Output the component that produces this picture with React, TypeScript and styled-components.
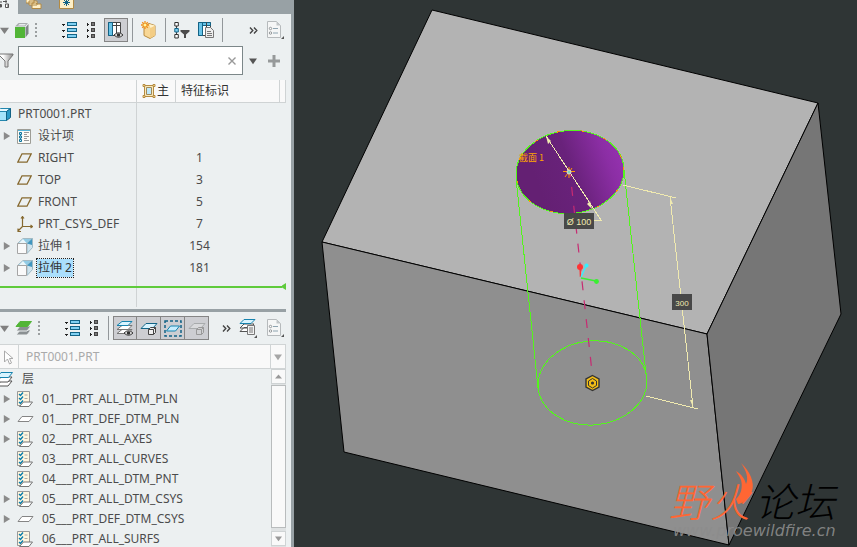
import React from "react";
import styled, { createGlobalStyle, css } from "styled-components";

const GlobalStyle = createGlobalStyle`
  * { box-sizing: border-box; }
  body { margin: 0; overflow: hidden; }
  button, input, select { font: inherit; color: inherit; }
  svg { display: block; flex: none; }
`;

const ui = '"Noto Sans", "Noto Sans CJK SC", sans-serif';

const Page = styled.div`
  display: flex;
  height: 100vh;
  background: #2f3535;
  color: #4b4b4b;
  font: 12px/20px ${ui};
`;

const Sidebar = styled.aside`
  display: flex;
  flex-direction: column;
  flex: none;
  width: 294px;
  background: #ecf0f1;
  border-right: 3px solid #98a1a5;
  overflow: hidden;
`;

const TabStrip = styled.div`
  display: flex;
  height: 14px;
  flex: none;
  overflow: hidden;
  background: #98a1a5;
`;

const Tab = styled.button<{ $active?: boolean }>`
  display: flex;
  align-items: flex-start;
  justify-content: ${(p) => (p.$active ? "flex-start" : "center")};
  width: ${(p) => (p.$active ? 18 : 32)}px;
  height: 14px;
  padding: 0;
  border: 0;
  background: ${(p) => (p.$active ? "#ecf0f1" : "transparent")};
`;

const Toolbar = styled.div`
  display: flex;
  align-items: center;
  flex: none;
  height: 32px;
  margin-right: 4px;
`;

const ToolButton = styled.button<{ $w?: number; $gap?: number; $on?: boolean }>`
  display: flex;
  align-items: center;
  justify-content: center;
  flex: none;
  width: ${(p) => p.$w ?? 24}px;
  height: 24px;
  margin: 0 0 0 ${(p) => p.$gap ?? 0}px;
  padding: 0;
  border: 0;
  background: none;
  ${(p) =>
    p.$on &&
    css`
      background: #cdced2;
      border: 1px solid #858585;
    `}
`;

const ButtonGroup = styled.div`
  display: flex;
  & > button + button { border-left-width: 0; }
`;

const Separator = styled.span`
  flex: none;
  width: 1px;
  height: 24px;
  margin: 0 4px;
  background: #92979a;
`;

const Push = styled.span`
  flex: 1;
`;

const SearchRow = styled.div`
  display: flex;
  align-items: center;
  flex: none;
  height: 29px;
  margin: 0 6px 5px 0;
`;

const SearchBox = styled.label`
  display: flex;
  align-items: center;
  flex: 1;
  height: 29px;
  margin-left: 4px;
  background: #fff;
  border: 1px solid #7c8789;
`;

const SearchInput = styled.input`
  flex: 1;
  min-width: 0;
  height: 24px;
  padding: 0 6px;
  border: 0;
  outline: 0;
  background: none;
`;

const TreeTable = styled.table`
  flex: none;
  width: 286px;
  border-collapse: separate;
  border-spacing: 0;
  table-layout: fixed;
`;

const HeadCell = styled.th<{ $w?: number }>`
  width: ${(p) => (p.$w ? `${p.$w}px` : "auto")};
  height: 23px;
  padding: 0 0 0 5px;
  overflow: hidden;
  background: #f9f9f9;
  border-right: 1px solid #cfd3d4;
  border-bottom: 1px solid #cfd3d4;
  font-weight: 400;
  color: #333;
  text-align: left;
  white-space: nowrap;
`;

const HeadLabel = styled.span`
  display: flex;
  align-items: center;
  gap: 1px;
`;

const NameCell = styled.td`
  height: 22px;
  padding: 0;
  border-right: 1px solid #cfd3d4;
`;

const IdCell = styled.td`
  padding: 0 18px 0 0;
  text-align: center;
`;

const FootCell = styled.td<{ $edge?: boolean }>`
  height: 28px;
  padding: 0;
  border-right: ${(p) => (p.$edge ? "1px solid #cfd3d4" : "0")};
`;

const RowLine = styled.div<{ $root?: boolean; $layer?: boolean }>`
  display: flex;
  align-items: center;
  height: ${(p) => (p.$layer ? 20 : 22)}px;
  white-space: nowrap;
  ${(p) => p.$root && "margin-left: -4px;"}
`;

const Expander = styled.button`
  display: flex;
  align-items: center;
  justify-content: flex-start;
  width: 17px;
  height: 20px;
  padding: 0 0 0 3px;
  flex: none;
  border: 0;
  background: none;
`;

const ExpanderSpace = styled.span`
  flex: none;
  width: 17px;
`;

const IconSlot = styled.span<{ $w?: number }>`
  display: flex;
  flex: none;
  width: ${(p) => p.$w ?? 20}px;
`;

const Name = styled.span<{ $selected?: boolean }>`
  line-height: 18px;
  padding: 0 1px;
  ${(p) =>
    p.$selected &&
    css`
      background: #abdffc;
      outline: 1px dotted #222;
      outline-offset: 0;
      color: #333;
    `}
`;

const InsertMarker = styled.div`
  display: flex;
  align-items: center;
  flex: none;
  width: 286px;
  height: 7px;
  margin: -24px 0 17px;
`;

const InsertLine = styled.span`
  flex: 1;
  height: 2px;
  background: #5fcb3c;
`;

const Divider = styled.hr`
  flex: none;
  width: 286px;
  height: 3px;
  margin: 2px 0 0;
  border: 0;
  background: #98a1a5;
`;

const PathRow = styled.div`
  display: flex;
  align-items: stretch;
  flex: none;
  height: 25px;
  margin-right: 5px;
  border: solid #d0d4d5;
  border-width: 1px 1px 1px 0;
  background: #f9f9f9;
`;

const PathSelect = styled.select`
  flex: 1;
  min-width: 0;
  padding: 0 7px;
  border: solid #d0d4d5;
  border-width: 0 1px;
  background: none;
  color: #aaa;
  appearance: none;
`;

const LayerArea = styled.div`
  display: flex;
  flex: 1;
  min-height: 0;
  margin-right: 5px;
`;

const LayerList = styled.ul`
  flex: 1;
  min-width: 0;
  margin: 0;
  padding: 0;
  list-style: none;
  overflow: hidden;
`;

const ScrollTrack = styled.div`
  display: flex;
  flex-direction: column;
  flex: none;
  gap: 1px;
  width: 15px;
  padding-bottom: 1px;
  background: #dfe2e3;
`;

const ScrollButton = styled.button`
  display: flex;
  align-items: center;
  justify-content: center;
  height: 15px;
  padding: 0;
  border: 1px solid #cfd3d4;
  background: #f9f9f9;
`;

const ScrollThumb = styled.div`
  flex: 1;
  margin-bottom: 2px;
  border: 1px solid #b9bcbd;
  background: #f9f9f9;
`;

const Viewport = styled.main`
  flex: 1;
  min-width: 0;
  & > svg { width: 100%; height: 100%; }
`;

/* ---------- icons ---------- */

const Triangle = ({ dir, size = 9, fill = "#808080" }: { dir: "down" | "right" | "up"; size?: number; fill?: string }) => (
  <svg width={size} height={size} viewBox="0 0 10 10">
    <path fill={fill} d={dir === "down" ? "M0 2h10L5 9z" : dir === "up" ? "M0 8h10L5 2z" : "M1 0l8 5-8 5z"} />
  </svg>
);

const Cube = () => (
  <svg width="14" height="15" viewBox="0 0 14 15">
    <path d="M0 4h10v11H0z" fill="#52b537" />
    <path d="M0 3.5 3.5 0H13l-3 3.5z" fill="#a9adaf" />
    <path d="M10.5 4.500 13.500 1v9.500l-3 4z" fill="#7e8486" />
    <path d="M3 2.500 4.500 1H11L9.500 2.500z" fill="#e7ebec" />
  </svg>
);

const Grip = () => (
  <svg width="2" height="14" fill="#9b9fa0" shapeRendering="crispEdges">
    {[0, 4, 8, 12].map((y) => <rect key={y} y={y} width="2" height="2" />)}
  </svg>
);

const WideList = () => (
  <svg width="17" height="17" viewBox="0 0 17 17" shapeRendering="crispEdges">
    {[0, 6, 12].map((y) => (
      <g key={y}>
        <path d={`M1 ${y + 2}h3v1H3v1H2v-1H1z`} fill="#222" />
        <rect x="6.500" y={y + 0.5} width="9" height="3" fill="#7fd0f2" stroke="#126386" />
      </g>
    ))}
  </svg>
);

const SmallList = () => (
  <svg width="9" height="17" viewBox="0 0 9 17" shapeRendering="crispEdges">
    {[0, 6, 12].map((y) => (
      <g key={y}>
        <path d={`M0 ${y + 1}h1v1h1v1H1v1H0z`} fill="#222" />
        <rect x="4.500" y={y + 0.5} width="3" height="3" fill="#777" stroke="#444" />
      </g>
    ))}
  </svg>
);

const Eye = ({ x = 0, y = 0 }: { x?: number; y?: number }) => (
  <g transform={`translate(${x} ${y})`}>
    <path d="M0 3Q4.500-1.500 9 3 4.500 7.500 0 3z" fill="#eee" stroke="#333" />
    <circle cx="4.500" cy="3" r="1.800" fill="#333" />
  </g>
);

const ColumnsEye = () => (
  <svg width="16" height="17" viewBox="0 0 16 17">
    <path d="M.5.500h12v13H.5z" fill="#fff" stroke="#444" />
    <path d="M.5.500h4v13h-4z" fill="#68c3e7" stroke="#126386" />
    <path d="M4.500 3.500h8M8.500.500v13" stroke="#444" />
    <Eye x={6} y={10} />
  </svg>
);

const NewPart = () => (
  <svg width="17" height="18" viewBox="0 0 17 18">
    <path d="M3 5.500 8 2.500l6 2v10l-5 3-6-3z" fill="#f8d795" stroke="#b98a3d" />
    <path d="M9 6.500 14 4.500v10l-5 3z" fill="#f3cd85" />
    <path d="M8 3l1.500 4 4.500-2.500z" fill="#fff1c9" />
    <path d="M4 0v8M0 4h8M1.200 1.200l5.600 5.600M6.800 1.200 1.200 6.800" stroke="#f0901c" strokeWidth="1.300" />
    <circle cx="4" cy="4" r="1.500" fill="#fff6a0" />
  </svg>
);

const NodeFilter = () => (
  <svg width="16" height="17" viewBox="0 0 16 17">
    <path d="M2.500 4v9" stroke="#444" />
    <path d="M.8.500h3.500V4H.8zM.8 12.500h3.500V16H.8z" fill="#fff" stroke="#333" />
    <path d="M.8 6.500h3.500V10H.8z" fill="#7fd0f2" stroke="#126386" />
    <path d="M6.500 8h9v1.500l-3.500 3V16h-2v-3.500l-3.500-3z" fill="#4c4c4c" />
  </svg>
);

const ColumnsDoc = () => (
  <svg width="16" height="16" viewBox="0 0 16 16">
    <path d="M.5.500h12v13H.5z" fill="#fff" stroke="#444" />
    <path d="M.5.500h4v13h-4zM4.500.500h8v3h-8z" fill="#68c3e7" stroke="#126386" />
    <path d="M8.500.500v5" stroke="#444" />
    <path d="M7.500 5.500h5l3 3v7h-8z" fill="#eee" stroke="#777" />
    <path d="M9 9.500h4M9 11.500h5M9 13.500h5" stroke="#777" />
  </svg>
);

const Doc = () => (
  <svg width="17" height="19" viewBox="0 0 17 19">
    <path d="M.5.500h9l4 4v12H.5z" fill="#f5f6f6" stroke="#b6babc" />
    <path d="M9.500.500v4h4z" fill="#c2c6c8" />
    <circle cx="3.500" cy="7.500" r="1.200" fill="#fff" stroke="#919597" />
    <circle cx="3.500" cy="12" r="1.200" fill="#fff" stroke="#919597" />
    <path d="M6 7.500h5M6 12h5" stroke="#8ea4b0" />
    <path d="M17 15v3h-3z" fill="#555" />
  </svg>
);

const Chevrons = () => (
  <svg width="9" height="7" viewBox="0 0 9 7" fill="none" stroke="#444" strokeWidth="1.400">
    <path d="M1 .5 3.800 3.500 1 6.500M5 .5l2.800 3L5 6.500" />
  </svg>
);

const Funnel = () => (
  <svg width="14" height="16" viewBox="0 0 14 16">
    <defs>
      <linearGradient id="funnel"><stop offset="0.3" stopColor="#fff" /><stop offset="1" stopColor="#888" /></linearGradient>
    </defs>
    <path d="M-1 1h14v1L8 8v6H5V8L-1 2z" fill="url(#funnel)" stroke="#777" />
  </svg>
);

const Cross = () => (
  <svg width="8" height="8" viewBox="0 0 8 8"><path d="M.5.500l7 7M7.500.500l-7 7" stroke="#999" strokeWidth="1.400" /></svg>
);

const Plus = () => (
  <svg width="12" height="12" viewBox="0 0 12 12"><path d="M6 0v12M0 6h12" stroke="#96999a" strokeWidth="3" /></svg>
);

const SectionIcon = () => (
  <svg width="14" height="14" viewBox="0 0 14 14">
    <path d="M2.500 1.500h9v11h-9z" fill="#fbe9bb" stroke="#b58c42" />
    <path d="M4.500 3.500h5v7h-5z" fill="#bfe8fa" stroke="#a08a5a" />
    <path d="M1 .5h2v2H1zM11 .5h2v2h-2zM1 11.500h2v2H1zM11 11.500h2v2h-2z" fill="#ffe4a0" stroke="#b58c42" />
  </svg>
);

const PartIcon = () => (
  <svg width="15" height="13" viewBox="0 0 15 13">
    <path d="M.5 3.500h10v9H.5z" fill="#a6e4fb" stroke="#2387ae" />
    <path d="M.5 3.500l4-3h10l-4 3z" fill="#e9f9ff" stroke="#2387ae" />
    <path d="M10.500 3.500l4-3v9l-4 3z" fill="#2b9ac7" stroke="#126386" />
  </svg>
);

const DesignIcon = () => (
  <svg width="14" height="15" viewBox="0 0 14 15">
    <path d="M.5.500h13v14H.5z" fill="#fbfbf7" stroke="#9d9d96" />
    <path d="M1 1h12v1H1z" fill="#56b4d8" />
    <path d="M3.500 3v9" stroke="#2386ae" />
    <path d="M2.500 3.500h2v2h-2zM2.500 7h2v2h-2zM2.500 10.500h2v2h-2z" fill="#bdeafa" stroke="#12749c" />
    <path d="M7 3.500h5M7 5.500h3M7 7.500h5M7 9.500h3M7 11.500h5" stroke="#999" />
  </svg>
);

const PlaneIcon = () => (
  <svg width="15" height="10" viewBox="0 0 15 10"><path d="M5 .8h9.200L10 9.200H.8z" fill="none" stroke="#86692f" strokeWidth="1.300" /></svg>
);

const CsysIcon = () => (
  <svg width="16" height="16" viewBox="0 0 16 16" fill="none" stroke="#86692f" strokeWidth="1.200">
    <path d="M5.500 1v9.500H15M5.500 10.500 1 15M4 2.500l1.500-2 1.500 2M13.500 9l2 1.500-2 1.500M1 12.500v3h3" />
  </svg>
);

const ExtrudeIcon = () => (
  <svg width="16" height="16" viewBox="0 0 16 16">
    <path d="M.5 5.500 6 .5h9.500L10 5.500z" fill="#91cbe5" stroke="#a4bac3" />
    <path d="M10 5.500 15.500.500v9L10 15.500z" fill="#cfe4ee" stroke="#9dbac6" />
    <path d="M10 5.500 15 1v6z" fill="#3f96bf" />
    <path d="M2 5 6 1l3.500 4z" fill="#ebf7fb" />
    <path d="M.5 5.500H9.500v10h-9z" fill="#fafafa" stroke="#a5a5a5" />
  </svg>
);

const StackIcon = ({ green }: { green?: boolean }) => (
  <svg width="17" height="15" viewBox="0 0 17 15">
    {[9, 5].map((y) => (
      <path key={y} d={`M5 ${y}h11l-4 5H1z`} fill={green ? "#8a9092" : "#fff"} stroke={green ? "#ecf0f1" : "#555"} />
    ))}
    <path d="M5 .5h11.500l-4 5H1z" fill={green ? "#52b537" : "#d9f4ff"} stroke={green ? "#52b537" : "#1783ae"} />
  </svg>
);

const LayersEye = () => (
  <svg width="18" height="17" viewBox="0 0 18 17">
    <path d="M6 9.500h10l-4 4H1z" fill="#fff" stroke="#777" />
    <path d="M6 5.500h10l-4 4H1z" fill="#fff" stroke="#777" />
    <path d="M6 1.500h10l-4 4H1z" fill="#d9f4ff" stroke="#1783ae" />
    <Eye x={8} y={10} />
  </svg>
);

const LayerBox = ({ muted }: { muted?: boolean }) => (
  <svg width="18" height="17" viewBox="0 0 18 17">
    <path d="M6 3.500h11l-4.500 5H1z" fill={muted ? "#d9dadc" : "#d9f4ff"} stroke={muted ? "#a8abac" : "#126386"} />
    <path d="M8.500 9.500 10.500 7.500h5v5L13.500 14.500h-5zM8.500 9.500h5v5M13.500 9.500l2-2" fill={muted ? "#cfd0d2" : "#eee"} stroke={muted ? "#999" : "#444"} />
  </svg>
);

const LayerSelect = () => (
  <svg width="18" height="17" viewBox="0 0 18 17">
    <path d="M1 1h16v15H1z" fill="none" stroke="#126386" strokeWidth="1.500" strokeDasharray="3 2" />
    <path d="M6.500 6h9l-4 5H2.500z" fill="#c6eeff" stroke="#1783ae" />
  </svg>
);

const LayerDoc = () => (
  <svg width="18" height="19" viewBox="0 0 18 19">
    <path d="M5 8.500h10l-4 4H1zM5 5h10l-4 4H1z" fill="#fff" stroke="#555" />
    <path d="M5 .5h11l-4 4H1z" fill="#d9f4ff" stroke="#1783ae" />
    <path d="M8.500 6.500h7v9h-7z" fill="#f3f3f3" stroke="#777" />
    <path d="M10 9h4M10 11h4M10 13h4" stroke="#777" />
    <path d="M18 16v3h-3z" fill="#555" />
  </svg>
);

const Pointer = () => (
  <svg width="10" height="15" viewBox="0 0 10 15"><path d="M.5 1v11l3-3 2 5 2-1-2-4.500H9z" fill="#fff" stroke="#aaa" /></svg>
);

const RuleIcon = () => (
  <svg width="16" height="16" viewBox="0 0 16 16">
    <path d="M.5.500h12v14H.5z" fill="#fff6df" stroke="#999" />
    <path d="M2 3l1.500 1.500L6 1.500M2 7l1.500 1.500L6 5.500M2 11l1.500 1.500L6 9.500" fill="none" stroke="#087cab" strokeWidth="1.400" />
    <path d="M7.500 4h3M7.500 7.500h3" stroke="#aaa" />
    <path d="M6.500 11h9L12 15.500H2.500z" fill="#fff" stroke="#777" />
  </svg>
);

const SheetIcon = () => (
  <svg width="17" height="7" viewBox="0 0 17 7"><path d="M5 .5h11l-4 5H1z" fill="#fff" stroke="#858585" /></svg>
);

const TreeTabIcon = () => (
  <svg width="10" height="9" viewBox="0 0 10 9"><path d="M0 2h2M6 0v3M.5 4v3M8 4.500v3M3 1.500h4M5.500 4h3v3.500h-3zM0 4.500h1.500V7H0z" fill="#fff" stroke="#555" /></svg>
);

const FoldersTabIcon = () => (
  <svg width="16" height="9" viewBox="0 0 16 9"><path d="M0-2h8v5H0zM3 1h8v4H3zM6 3h4l1 1h4v4.500H6z" fill="#fff0c7" stroke="#b28a44" /></svg>
);

const StarTabIcon = () => (
  <svg width="15" height="9" viewBox="0 0 15 9">
    <path d="M.5-2h14V8.500H.5z" fill="#fff0c7" stroke="#b28a44" />
    <path d="M7.500 0v6M4 2.500h7M5 0l5 5M10 0 5 5" stroke="#126386" />
  </svg>
);

/* ---------- data ---------- */

type Row = { name: string; id?: string; icon: React.ReactNode; open?: boolean; selected?: boolean; root?: boolean };

const rows: Row[] = [
  { name: "PRT0001.PRT", icon: <PartIcon />, root: true },
  { name: "设计项", icon: <DesignIcon />, open: true },
  { name: "RIGHT", id: "1", icon: <PlaneIcon /> },
  { name: "TOP", id: "3", icon: <PlaneIcon /> },
  { name: "FRONT", id: "5", icon: <PlaneIcon /> },
  { name: "PRT_CSYS_DEF", id: "7", icon: <CsysIcon /> },
  { name: "拉伸 1", id: "154", icon: <ExtrudeIcon />, open: true },
  { name: "拉伸 2", id: "181", icon: <ExtrudeIcon />, open: true, selected: true },
];

const layers = [
  { name: "01___PRT_ALL_DTM_PLN", open: true },
  { name: "01___PRT_DEF_DTM_PLN", open: true, sheet: true },
  { name: "02___PRT_ALL_AXES", open: true },
  { name: "03___PRT_ALL_CURVES" },
  { name: "04___PRT_ALL_DTM_PNT" },
  { name: "05___PRT_ALL_DTM_CSYS", open: true },
  { name: "05___PRT_DEF_DTM_CSYS", open: true, sheet: true },
  { name: "06___PRT_ALL_SURFS" },
];

const Toggle = ({ open, name }: { open?: boolean; name: string }) =>
  open ? (
    <Expander aria-label={name}><Triangle dir="right" size={8} fill="#8b8b8b" /></Expander>
  ) : (
    <ExpanderSpace />
  );

const ModelTree = () => (
  <TreeTable>
    <thead>
      <tr>
        <HeadCell $w={137} />
        <HeadCell $w={39}><HeadLabel><SectionIcon />主</HeadLabel></HeadCell>
        <HeadCell $w={104}>特征标识</HeadCell>
        <HeadCell />
      </tr>
    </thead>
    <tbody>
      {rows.map((r) => (
        <tr key={r.name}>
          <NameCell>
            <RowLine $root={r.root}>
              {!r.root && <Toggle open={r.open} name={r.name} />}
              <IconSlot $w={r.root ? 21 : 20}>{r.icon}</IconSlot>
              <Name $selected={r.selected}>{r.name}</Name>
            </RowLine>
          </NameCell>
          <IdCell colSpan={2}>{r.id}</IdCell>
        </tr>
      ))}
      <tr>
        <FootCell $edge />
        <FootCell colSpan={3} />
      </tr>
    </tbody>
  </TreeTable>
);

const cream = "#f0eab0";
const lime = "#54f51c";

const Scene = () => (
  <svg viewBox="294 0 563 547" preserveAspectRatio="xMinYMin slice" role="img" aria-label="PRT0001">
    <defs>
      <linearGradient id="bore" x1="0.1" x2="1" y1="0.2" y2="0">
        <stop stopColor="#642073" />
        <stop offset="0.38" stopColor="#69227b" />
        <stop offset="0.75" stopColor="#8b2ea4" />
        <stop offset="1" stopColor="#9a34b6" />
      </linearGradient>
    </defs>
    <g stroke="#000" strokeLinejoin="round">
      <path d="M432 10 818 103 707 334 322 242z" fill="#b3b3b3" />
      <path d="M322 242 707 334 729 545 344 452z" fill="#8f8f8f" />
      <path d="M707 334 818 103 841 314 729 545z" fill="#767676" />
    </g>
    <g fill="none" stroke={lime} shapeRendering="crispEdges">
      <ellipse cx="570" cy="172" rx="54" ry="41.500" fill="url(#bore)" transform="rotate(-5 570 172)" />
      <ellipse cx="570" cy="172" rx="54" ry="41.500" stroke="#ff9800" strokeDasharray="3 21" transform="rotate(-5 570 172)" />
      <ellipse cx="592.500" cy="383" rx="54.500" ry="42" transform="rotate(-5 592 383)" />
      <path d="M516 178 538 388M624 170 647 383" />
    </g>
    <path d="M570 172 592 372" stroke="#c72b72" strokeWidth="1.200" strokeDasharray="9 10" strokeDashoffset="4" />
    <g fill="none" stroke={cream} shapeRendering="crispEdges">
      <path d="M546 136 601 220H594M623 185 676 198M670 197 693 407M646 396 698 409" />
    </g>
    <path d="M546 136 551 141 548 144zM592 209 587 204 590 201zM670 197 673 204 670 204zM693 407 690 400 693 400z" fill={cream} />
    <g stroke="#ff9800">
      <path d="M563 171.500h12M569 167v11M565 177l3-4M572 168l-2 3" />
      <circle cx="569" cy="172" r="2" fill="#7fd7b5" stroke="#ddd" />
    </g>
    <text x="519" y="161" fill="#ffa500" fontFamily='"Noto Sans CJK SC", sans-serif' fontSize="9">截面 1</text>
    <path d="M564 213h30v16h-30zM672 294h20v16h-20z" fill="#484848" />
    <text x="579" y="225" fill={cream} textAnchor="middle" fontFamily='"Liberation Sans", sans-serif' fontSize="9">Ø 100</text>
    <text x="682" y="306" fill={cream} textAnchor="middle" fontFamily='"Liberation Sans", sans-serif' fontSize="8">300</text>
    <g strokeWidth="1.400">
      <path d="M580 267 580.500 277" stroke="#ff3434" />
      <path d="M581 277 586 266" stroke="#35efff" />
      <path d="M581 278 596 281" stroke="#3aef32" />
    </g>
    <circle cx="580" cy="267" r="3" fill="#f33" />
    <circle cx="586.500" cy="265.500" r="2" fill="#35efff" />
    <circle cx="596.500" cy="281.500" r="2.400" fill="#3aef32" />
    <path d="M592.500 375.500 599 379v8l-6.500 3.500L586 387v-8z" fill="#f2bd16" stroke="#333" strokeWidth="1.400" />
    <path d="M592.500 378.500 596.500 381v4.500l-4 2.500-4-2.500V381z" fill="#f2bd16" stroke="#333" />
    <circle cx="592.500" cy="383" r="1.600" fill="#333" />
    <g fontFamily='"Noto Sans CJK SC", sans-serif' fontSize="40" fontStyle="italic" fontWeight="300">
      <text x="669" y="517" fill="#ff6633">野</text>
      <text x="710" y="517" fill="#ff6633">火</text>
      <text x="755" y="517" fill="#000">论坛</text>
    </g>
    <path d="M741 463C750 471 755 483 752 491C749 499 742 504 738 504L736 499C741 495 743 487 741 480C739 475 737 473 736 471C741 474 745 479 746 484C749 478 746 470 741 463z" fill="#ff6633" />
    <text x="673" y="536" fill="#8c8c8c" fillOpacity="0.9" fontFamily='"DejaVu Sans", sans-serif' fontSize="16" fontStyle="italic">www.proewildfire.cn</text>
  </svg>
);

export default function App() {
  return (
    <Page>
      <GlobalStyle />
      <Sidebar>
        <TabStrip>
          <Tab $active aria-label="模型树"><TreeTabIcon /></Tab>
          <Tab aria-label="文件夹"><FoldersTabIcon /></Tab>
          <Tab aria-label="收藏夹"><StarTabIcon /></Tab>
        </TabStrip>
        <Toolbar>
          <ToolButton $w={9} aria-label="菜单"><Triangle dir="down" /></ToolButton>
          <ToolButton $w={14} $gap={6} aria-label="模型"><Cube /></ToolButton>
          <ToolButton $w={2} $gap={6} aria-label="移动"><Grip /></ToolButton>
          <ToolButton $gap={20} aria-label="展开全部"><WideList /></ToolButton>
          <ToolButton $w={20} aria-label="收缩全部"><SmallList /></ToolButton>
          <ToolButton $gap={3} $on aria-label="显示列"><ColumnsEye /></ToolButton>
          <Separator />
          <ToolButton aria-label="新建"><NewPart /></ToolButton>
          <Separator />
          <ToolButton aria-label="树过滤器"><NodeFilter /></ToolButton>
          <ToolButton aria-label="树列"><ColumnsDoc /></ToolButton>
          <Separator />
          <Push />
          <ToolButton $w={20} aria-label="更多"><Chevrons /></ToolButton>
          <ToolButton aria-label="设置"><Doc /></ToolButton>
        </Toolbar>
        <SearchRow>
          <ToolButton $w={14} aria-label="过滤"><Funnel /></ToolButton>
          <SearchBox>
            <SearchInput aria-label="搜索" />
            <ToolButton $w={20} aria-label="清除"><Cross /></ToolButton>
          </SearchBox>
          <ToolButton $w={20} aria-label="搜索选项"><Triangle dir="down" size={8} fill="#555" /></ToolButton>
          <ToolButton $w={22} aria-label="添加"><Plus /></ToolButton>
        </SearchRow>
        <ModelTree />
        <InsertMarker>
          <InsertLine />
          <svg width="4" height="7" viewBox="0 0 4 7"><path d="M4 0v7L0 4.500v-2z" fill="#5fcb3c" /></svg>
        </InsertMarker>
        <Divider />
        <Toolbar>
          <ToolButton $w={9} aria-label="菜单"><Triangle dir="down" /></ToolButton>
          <ToolButton $w={17} $gap={6} aria-label="层树"><StackIcon green /></ToolButton>
          <ToolButton $w={2} $gap={6} aria-label="移动"><Grip /></ToolButton>
          <ToolButton $gap={20} aria-label="展开层"><WideList /></ToolButton>
          <ToolButton $w={20} aria-label="收缩层"><SmallList /></ToolButton>
          <Separator />
          <ButtonGroup>
            <ToolButton $on aria-label="显示层"><LayersEye /></ToolButton>
            <ToolButton $on aria-label="层项"><LayerBox /></ToolButton>
            <ToolButton $on aria-label="选择层"><LayerSelect /></ToolButton>
            <ToolButton $on aria-label="隔离层"><LayerBox muted /></ToolButton>
          </ButtonGroup>
          <Push />
          <ToolButton $w={20} aria-label="更多"><Chevrons /></ToolButton>
          <ToolButton aria-label="层设置"><LayerDoc /></ToolButton>
          <ToolButton $gap={3} aria-label="设置"><Doc /></ToolButton>
        </Toolbar>
        <PathRow>
          <ToolButton $w={18} aria-label="选择"><Pointer /></ToolButton>
          <PathSelect aria-label="活动模型"><option>PRT0001.PRT</option></PathSelect>
          <ToolButton $w={14} aria-label="打开列表"><Triangle dir="down" size={8} fill="#a6a6a6" /></ToolButton>
        </PathRow>
        <LayerArea>
          <LayerList>
            <li>
              <RowLine $layer $root>
                <IconSlot $w={25}><StackIcon /></IconSlot>
                <Name>层</Name>
              </RowLine>
            </li>
            {layers.map((l) => (
              <li key={l.name}>
                <RowLine $layer>
                  <Toggle open={l.open} name={l.name} />
                  <IconSlot $w={24}>{l.sheet ? <SheetIcon /> : <RuleIcon />}</IconSlot>
                  <Name>{l.name}</Name>
                </RowLine>
              </li>
            ))}
          </LayerList>
          <ScrollTrack>
            <ScrollButton aria-label="向上滚动"><Triangle dir="up" size={7} fill="#999" /></ScrollButton>
            <ScrollThumb />
            <ScrollButton aria-label="向下滚动"><Triangle dir="down" size={7} fill="#999" /></ScrollButton>
          </ScrollTrack>
        </LayerArea>
      </Sidebar>
      <Viewport><Scene /></Viewport>
    </Page>
  );
}
